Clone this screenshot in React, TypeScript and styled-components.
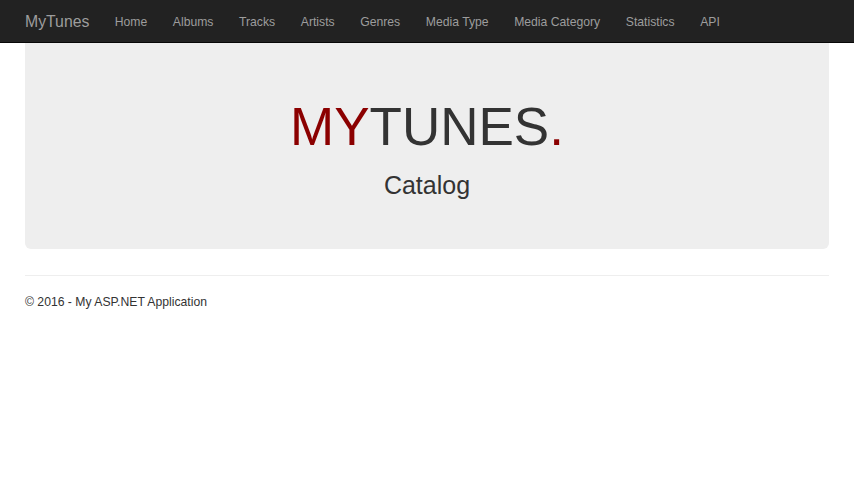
import React from "react";
import styled, { createGlobalStyle } from "styled-components";

const Global = createGlobalStyle`
  html, body { margin: 0; padding: 0; background: #fff; }
  body { font-family: "Liberation Sans", Arial, sans-serif; color: #333; font-size: 12.6px; }
`;

const Navbar = styled.nav`
  height: 43px;
  background: #222;
  border-bottom: 1px solid #080808;
  display: flex;
  align-items: center;
  padding: 2px 25px 0;
  box-sizing: border-box;
`;

const Brand = styled.a`
  color: #9d9d9d;
  font-size: 15.8px;
  text-decoration: none;
  margin-right: 12.5px;
`;

const NavList = styled.ul`
  list-style: none;
  margin: 0;
  padding: 0;
  display: flex;
`;

const NavLink = styled.a`
  display: block;
  color: #9d9d9d;
  font-size: 12.2px;
  text-decoration: none;
  padding: 0 12.8px;
`;

const Body = styled.div`
  padding: 0 25px;
`;

const Jumbotron = styled.div`
  background: #eee;
  border-radius: 0 0 6px 6px;
  height: 206px;
  box-sizing: border-box;
  display: flex;
  flex-direction: column;
  align-items: center;
  padding-top: 52px;
  margin-bottom: 26px;
`;

const Title = styled.h1`
  margin: 0;
  font-weight: normal;
  font-size: 53px;
  line-height: 64px;
  color: #333;
`;

const Red = styled.span`
  color: #8b0000;
`;

const Subtitle = styled.h2`
  margin: 11px 0 0;
  font-weight: normal;
  font-size: 25px;
  line-height: 30px;
  color: #333;
`;

const Rule = styled.hr`
  margin: 0;
  border: 0;
  border-top: 1px solid #eee;
`;

const Footer = styled.footer`
  padding-top: 18px;
  font-size: 12.2px;
  line-height: 16px;
  color: #333;
`;

const links = ["Home", "Albums", "Tracks", "Artists", "Genres", "Media Type", "Media Category", "Statistics", "API"];

export default function App() {
  return (
    <>
      <Global />
      <Navbar>
        <Brand href="#">MyTunes</Brand>
        <NavList>
          {links.map((l) => (
            <li key={l}>
              <NavLink href="#">{l}</NavLink>
            </li>
          ))}
        </NavList>
      </Navbar>
      <Body>
        <Jumbotron>
          <Title>
            <Red>MY</Red>TUNES<Red>.</Red>
          </Title>
          <Subtitle>Catalog</Subtitle>
        </Jumbotron>
        <Rule />
        <Footer>© 2016 - My ASP.NET Application</Footer>
      </Body>
    </>
  );
}
